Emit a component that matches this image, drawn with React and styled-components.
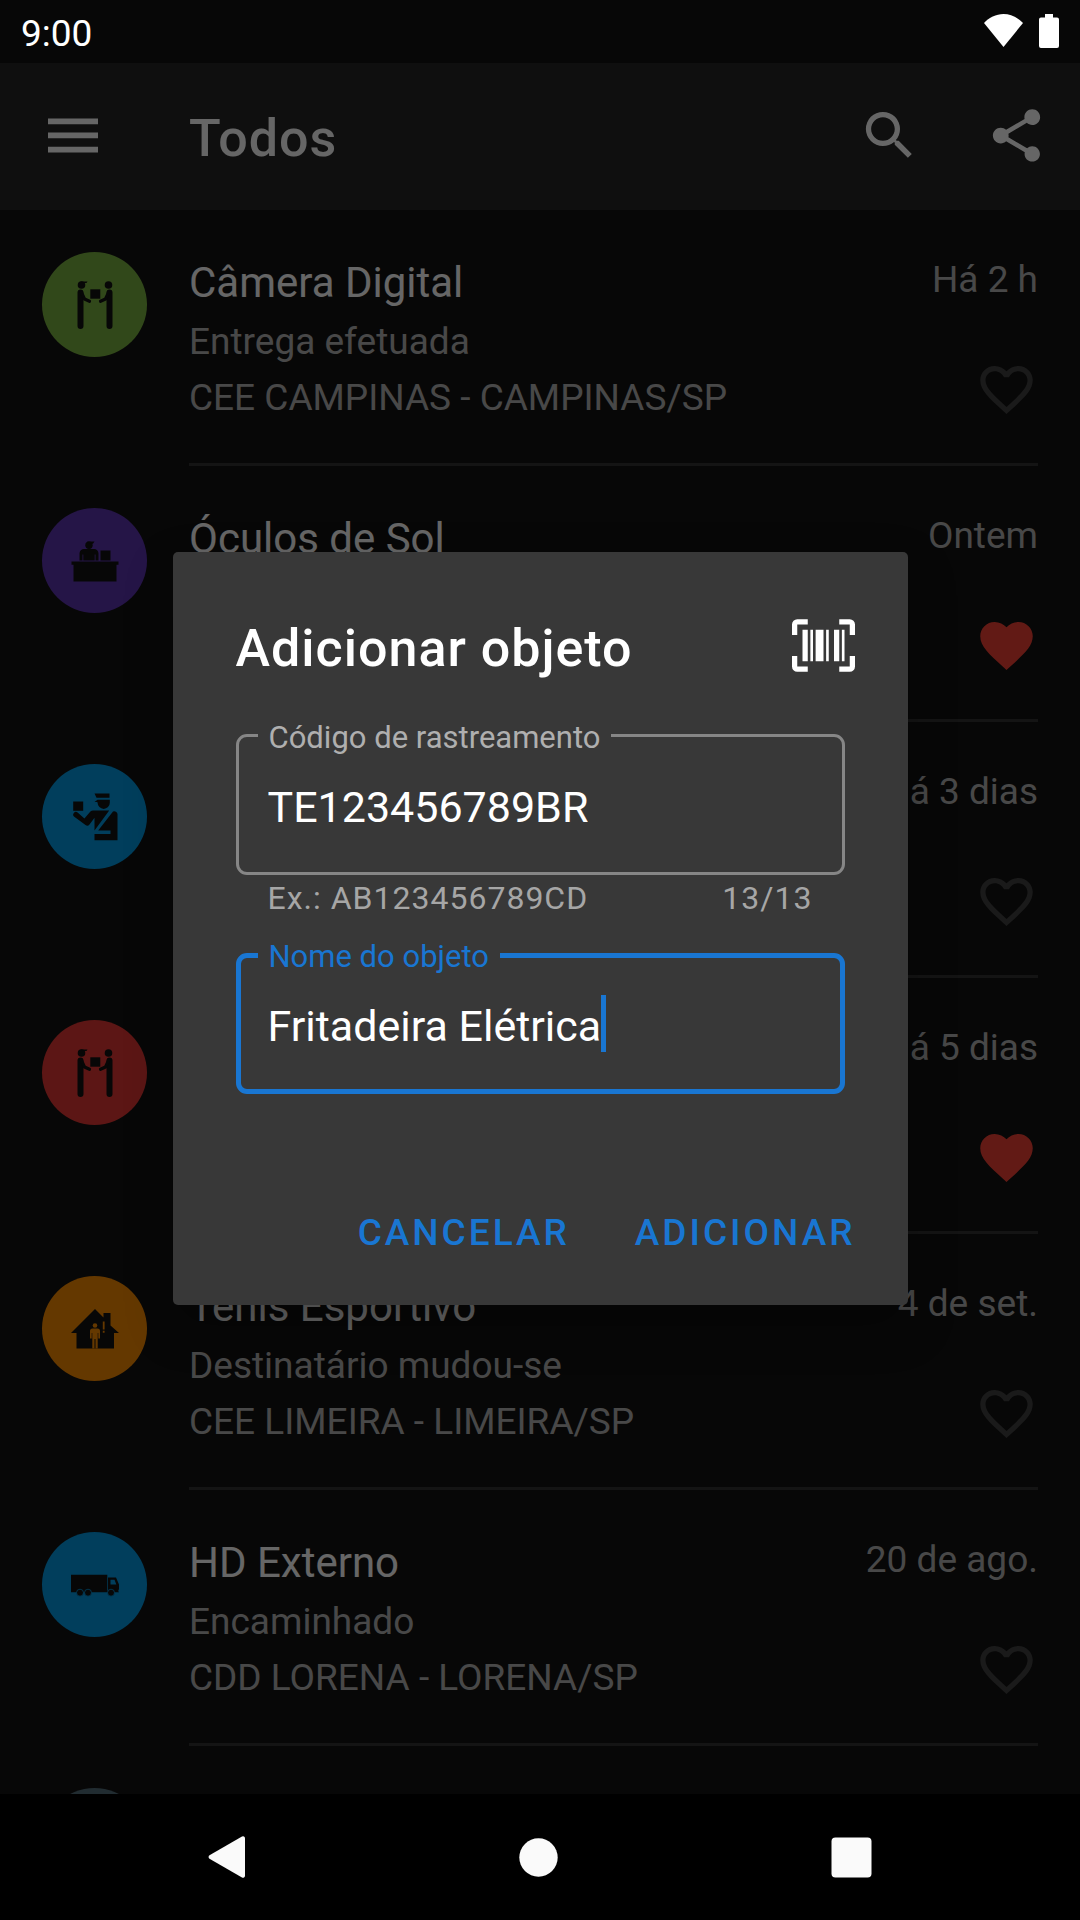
import React, { useState } from "react";
import styled, { createGlobalStyle } from "styled-components";
import { MdSearch, MdShare, MdFavorite, MdFavoriteBorder } from "react-icons/md";

const Global = createGlobalStyle`
  * { box-sizing: border-box; }
  html, body { margin: 0; background: #000; }
  body, button, input { font-family: Roboto, "Noto Sans", sans-serif; }
  h1, h2, p, ul { margin: 0; padding: 0; font: inherit; }
  svg { display: block; flex: none; }
`;

const Screen = styled.div`
  display: flex;
  flex-direction: column;
  height: 100vh;
  overflow: hidden;
  background: #121212;
  color: #fff;
`;

const StatusBar = styled.header`
  position: relative;
  z-index: 2;
  display: flex;
  align-items: flex-start;
  justify-content: space-between;
  flex: none;
  height: 63px;
  padding: 12px 21px 0;
  font-size: 37px;
  line-height: 44px;
`;

const StatusIcons = styled.div`
  display: flex;
  gap: 16px;
  padding-top: 2px;
`;

const AppBar = styled.div`
  display: flex;
  align-items: center;
  flex: none;
  height: 147px;
  padding: 0 32px 2px 42px;
  gap: 64px;
  background: #272727;
`;

const AppTitle = styled.h1`
  flex: 1;
  padding: 6px 0 0 20px;
  font-size: 52px;
  font-weight: 500;
  line-height: 62px;
  letter-spacing: 1px;
`;

const IconButton = styled.button`
  display: flex;
  padding: 0;
  border: 0;
  background: none;
  color: ${(p) => p.$color || "#fff"};
  cursor: pointer;
`;

const List = styled.ul`
  flex: 1;
  min-height: 0;
  overflow: hidden;
  list-style: none;
`;

const Row = styled.li`
  display: flex;
  gap: 42px;
  padding: 0 42px;
`;

const Avatar = styled.div`
  display: flex;
  align-items: center;
  justify-content: center;
  flex: none;
  width: 105px;
  height: 105px;
  margin-top: 42px;
  border-radius: 50%;
  background: ${(p) => p.$color};
  color: #121212;
`;

const RowBody = styled.div`
  display: flex;
  justify-content: space-between;
  flex: 1;
  min-width: 0;
  height: 256px;
  border-bottom: 3px solid #333;
`;

const RowText = styled.div`
  padding-top: 48px;
`;

const RowTitle = styled.h2`
  font-size: 42px;
  line-height: 50px;
`;

const RowDetail = styled.p`
  margin-top: 12px;
  color: #b5b5b5;
  font-size: 37px;
  line-height: 44px;
`;

const RowAside = styled.div`
  display: flex;
  flex-direction: column;
  align-items: flex-end;
  justify-content: space-between;
  padding: 48px 0 42px;
`;

const RowTime = styled.time`
  font-size: 37px;
  line-height: 44px;
  color: #b5b5b5;
  white-space: nowrap;
`;

const Scrim = styled.div`
  position: absolute;
  inset: 0;
  z-index: 1;
  display: flex;
  align-items: center;
  justify-content: center;
  padding: 63px 0 126px;
  background: rgba(0, 0, 0, 0.6);
`;

const Dialog = styled.form`
  width: 735px;
  max-width: 90%;
  border-radius: 5px;
  background: #383838;
  box-shadow: 0 20px 48px rgba(0, 0, 0, 0.3);
`;

const DialogHeader = styled.div`
  display: flex;
  align-items: flex-start;
  justify-content: space-between;
  padding: 62px 53px 0 63px;
`;

const DialogTitle = styled.h2`
  font-size: 52px;
  font-weight: 500;
  line-height: 70px;
  letter-spacing: 1px;
`;

const Fields = styled.div`
  display: flex;
  flex-direction: column;
  padding: 50px 63px 0;
`;

const FieldBox = styled.div`
  position: relative;
  display: flex;
  align-items: center;
  height: 141px;
  padding: 0 ${(p) => (p.$active ? 27 : 29)}px;
  border: ${(p) => (p.$active ? "5px solid #1976d2" : "3px solid #868686")};
  border-radius: 11px;
`;

const FieldLabel = styled.label`
  position: absolute;
  left: ${(p) => (p.$active ? 17 : 19)}px;
  top: ${(p) => (p.$active ? -23 : -21)}px;
  padding: 0 11px;
  background: #383838;
  color: ${(p) => (p.$active ? "#1976d2" : "#afafaf")};
  font-size: 31px;
  line-height: 44px;
  white-space: nowrap;
`;

const TextInput = styled.input`
  field-sizing: content;
  max-width: 100%;
  padding: 4px 0 0;
  border: 0;
  outline: 0;
  background: none;
  color: #fff;
  caret-color: transparent;
  font-size: 43px;
  line-height: 58px;
`;

const Caret = styled.span`
  width: 5px;
  height: 57px;
  background: #1976d2;
`;

const Helper = styled.div`
  display: flex;
  justify-content: space-between;
  padding: 4px 32px 35px;
  color: #a6a6a6;
  font-size: 32px;
  line-height: 39px;
  letter-spacing: 1px;
`;

const Actions = styled.div`
  display: flex;
  justify-content: flex-end;
  gap: 23px;
  padding: 91px 31px 26px;
`;

const TextButton = styled.button`
  height: 94px;
  padding: 0 21px;
  border: 0;
  background: none;
  color: #1976d2;
  font-size: 37px;
  font-weight: 500;
  letter-spacing: 3px;
  text-transform: uppercase;
  cursor: pointer;
`;

const NavBar = styled.nav`
  position: relative;
  z-index: 2;
  display: flex;
  justify-content: center;
  flex: none;
  height: 126px;
  padding-right: 2px;
  background: #000;
`;

const NavButton = styled.button`
  display: flex;
  align-items: center;
  justify-content: center;
  flex: 0 0 29%;
  padding: 0;
  border: 0;
  background: none;
  color: #fafafa;
`;

const WifiIcon = () => (
  <svg width="39" height="33" viewBox="0 0 39 33" fill="currentColor" aria-hidden="true">
    <path d="M0 9C5 3.500 12 0 19.500 0S34 3.500 39 9L19.500 33z" />
  </svg>
);

const BatteryIcon = () => (
  <svg width="20" height="34" viewBox="0 0 20 34" fill="currentColor" aria-hidden="true">
    <path d="M6 0h8v3.500h4a2 2 0 0 1 2 2V32a2 2 0 0 1-2 2H2a2 2 0 0 1-2-2V5.500a2 2 0 0 1 2-2h4z" />
  </svg>
);

const MenuIcon = () => (
  <svg width="63" height="63" viewBox="0 0 63 63" fill="currentColor" aria-hidden="true">
    <path d="M6 14.500h50v5.700H6zM6 28.600h50v5.700H6zM6 42.700h50v5.700H6z" />
  </svg>
);

const BarcodeIcon = () => (
  <svg width="63" height="63" viewBox="0 0 24 24" fill="currentColor" aria-hidden="true">
    <path d="M4,6H6V18H4V6M7,6H8V18H7V6M9,6H12V18H9V6M13,6H14V18H13V6M16,6H18V18H16V6M19,6H20V18H19V6M2,4V8H0V4A2,2 0 0,1 2,2H6V4H2M22,2A2,2 0 0,1 24,4V8H22V4H18V2H22M2,16V20H6V22H2A2,2 0 0,1 0,20V16H2M22,20V16H24V20A2,2 0 0,1 22,22H18V20H22Z" />
  </svg>
);

const HandoverIcon = () => (
  <svg width="48" height="48" viewBox="0 0 48 48" fill="currentColor" aria-hidden="true">
    <circle cx="10.500" cy="4" r="3.800" />
    <path d="M9 0.400h7.500l-1 1.600h-3z" />
    <circle cx="37.500" cy="4" r="3.800" />
    <path d="M19.300 8.300h10v9.400h-10z" />
    <path d="M6.500 45V11.500a3 3 0 0 1 6 0V45a3 3 0 0 1-6 0zM35.500 45V11.500a3 3 0 0 1 6 0V45a3 3 0 0 1-6 0z" />
    <path d="M10.500 11.500l3 6.500 5 2.300M37.500 11.500l-3 6.500-5 2.300" fill="none" stroke="currentColor" strokeWidth="3.200" strokeLinecap="round" strokeLinejoin="round" />
  </svg>
);

const DeskIcon = () => (
  <svg width="48" height="48" viewBox="0 0 48 48" fill="currentColor" aria-hidden="true">
    <circle cx="18" cy="8.200" r="3.700" />
    <path d="M16 4.500h7.500l-1.500 2.300h-3z" />
    <path d="M8.500 23.500v-7a4.500 4.500 0 0 1 4.500-4.500h10a4.500 4.500 0 0 1 4.500 4.500v7h-3v-6h-.8v6H12.300v-6h-.8v6z" />
    <path d="M29.500 13.500h10v10h-10zM0.500 24.500h47v3.200h-2V44.500h-43V27.700h-2z" />
  </svg>
);

const OfficerIcon = () => (
  <svg width="48" height="48" viewBox="0 0 48 48" fill="currentColor" aria-hidden="true">
    <path d="M23.500 0.500H38.500V4.800H25.500zM26.500 6.800H38.800v3a6.100 6.100 0 0 1-12.200 0l-.4-.8h-2.700l2-1.500z" />
    <path d="M2.200 8.500h10v9.300h-10z" />
    <path d="M23 17.500H38.200L23.500 37.500V24.700L18.500 31.500a3 3 0 0 1-4 .6L3.300 23.700a2.500 2.500 0 0 1 3.300-4.200l6.800 6 6-7a4 4 0 0 1 3.600-1z" />
    <path d="M42 18.500a3.200 3.200 0 0 1 4.500 2.600V47.200H23.500V41H39.500V37.500H27.200z" />
  </svg>
);

const HouseIcon = () => (
  <svg width="48" height="48" viewBox="0 0 48 48" fill="currentColor" aria-hidden="true">
    <path d="M24 4l8.500 8.500V8h7v12.500L48 28h-5v15.500H5.500V28H0z" />
    <g fill="#fb8c00">
      <circle cx="24" cy="20.500" r="2.300" />
      <path d="M21.500 23.500h5a2.500 2.500 0 0 1 2.500 2.500v7.500h-1.700V28h-.6v15.500h-2.200V34h-1v9.500h-2.200V28h-.6v5.500H19V26a2.500 2.500 0 0 1 2.500-2.500zM31.800 16.500h1.800v8h-1.800zM31.800 25.700h1.800v2h-1.800z" />
    </g>
  </svg>
);

const TruckIcon = () => (
  <svg width="48" height="48" viewBox="0 0 48 48" fill="currentColor" aria-hidden="true">
    <path d="M0 13.700h36.300v15.800h.7V16.500h8l3 7v4.500l-.8 2 .8 1.300H0z" />
    <path d="M39.500 18.700h4l1.800 4.800h-5.800z" fill="#039be5" />
    <g stroke="#039be5" strokeWidth="0.800">
      <circle cx="9" cy="31.700" r="3.500" />
      <circle cx="17" cy="31.700" r="3.500" />
      <circle cx="40" cy="31.700" r="3.500" />
    </g>
  </svg>
);

const objects = [
  { title: "Câmera Digital", status: "Entrega efetuada", place: "CEE CAMPINAS - CAMPINAS/SP", time: "Há 2 h", color: "#7cb342", icon: HandoverIcon },
  { title: "Óculos de Sol", time: "Ontem", color: "#5e35b1", icon: DeskIcon, favorite: true },
  { title: "", time: "Há 3 dias", color: "#039be5", icon: OfficerIcon },
  { title: "", time: "Há 5 dias", color: "#e53935", icon: HandoverIcon, favorite: true },
  { title: "Tênis Esportivo", status: "Destinatário mudou-se", place: "CEE LIMEIRA - LIMEIRA/SP", time: "4 de set.", color: "#fb8c00", icon: HouseIcon },
  { title: "HD Externo", status: "Encaminhado", place: "CDD LORENA - LORENA/SP", time: "20 de ago.", color: "#039be5", icon: TruckIcon },
];

function ObjectRow({ item }) {
  const Icon = item.icon;
  return (
    <Row>
      <Avatar $color={item.color}>
        <Icon />
      </Avatar>
      <RowBody>
        <RowText>
          <RowTitle>{item.title}</RowTitle>
          {item.status && <RowDetail>{item.status}</RowDetail>}
          {item.place && <RowDetail>{item.place}</RowDetail>}
        </RowText>
        <RowAside>
          <RowTime>{item.time}</RowTime>
          <IconButton type="button" aria-label="Favorito" $color={item.favorite ? "#f44336" : "#424242"}>
            {item.favorite ? <MdFavorite size={63} /> : <MdFavoriteBorder size={63} />}
          </IconButton>
        </RowAside>
      </RowBody>
    </Row>
  );
}

export default function App() {
  const [code, setCode] = useState("TE123456789BR");
  const [name, setName] = useState("Fritadeira Elétrica");

  return (
    <Screen>
      <Global />
      <StatusBar>
        <span>9:00</span>
        <StatusIcons>
          <WifiIcon />
          <BatteryIcon />
        </StatusIcons>
      </StatusBar>
      <AppBar>
        <IconButton type="button" aria-label="Menu">
          <MenuIcon />
        </IconButton>
        <AppTitle>Todos</AppTitle>
        <IconButton type="button" aria-label="Buscar">
          <MdSearch size={63} />
        </IconButton>
        <IconButton type="button" aria-label="Compartilhar">
          <MdShare size={63} />
        </IconButton>
      </AppBar>
      <List>
        {objects.map((item) => (
          <ObjectRow key={item.time} item={item} />
        ))}
        <Row>
          <Avatar $color="#546e7a" />
        </Row>
      </List>
      <Scrim>
        <Dialog role="dialog" aria-labelledby="dialog-title" onSubmit={(e) => e.preventDefault()}>
          <DialogHeader>
            <DialogTitle id="dialog-title">Adicionar objeto</DialogTitle>
            <IconButton type="button" aria-label="Ler código de barras">
              <BarcodeIcon />
            </IconButton>
          </DialogHeader>
          <Fields>
            <FieldBox>
              <FieldLabel htmlFor="code">Código de rastreamento</FieldLabel>
              <TextInput id="code" maxLength={13} value={code} onChange={(e) => setCode(e.target.value)} />
            </FieldBox>
            <Helper>
              <span>Ex.: AB123456789CD</span>
              <span>{code.length}/13</span>
            </Helper>
            <FieldBox $active>
              <FieldLabel $active htmlFor="name">Nome do objeto</FieldLabel>
              <TextInput id="name" value={name} onChange={(e) => setName(e.target.value)} />
              <Caret />
            </FieldBox>
          </Fields>
          <Actions>
            <TextButton type="button">Cancelar</TextButton>
            <TextButton type="submit">Adicionar</TextButton>
          </Actions>
        </Dialog>
      </Scrim>
      <NavBar>
        <NavButton type="button" aria-label="Voltar">
          <svg width="37" height="42" viewBox="0 0 37 42" fill="currentColor">
            <path d="M34 .5a2 2 0 0 1 3 1.700v37.600a2 2 0 0 1-3 1.700L1.500 22.700a2 2 0 0 1 0-3.400z" />
          </svg>
        </NavButton>
        <NavButton type="button" aria-label="Início">
          <svg width="39" height="39" viewBox="0 0 39 39" fill="currentColor">
            <circle cx="19.500" cy="19.500" r="19.200" />
          </svg>
        </NavButton>
        <NavButton type="button" aria-label="Recentes">
          <svg width="41" height="41" viewBox="0 0 41 41" fill="currentColor">
            <rect x="0.500" y="0.500" width="40" height="40" rx="4" />
          </svg>
        </NavButton>
      </NavBar>
    </Screen>
  );
}
